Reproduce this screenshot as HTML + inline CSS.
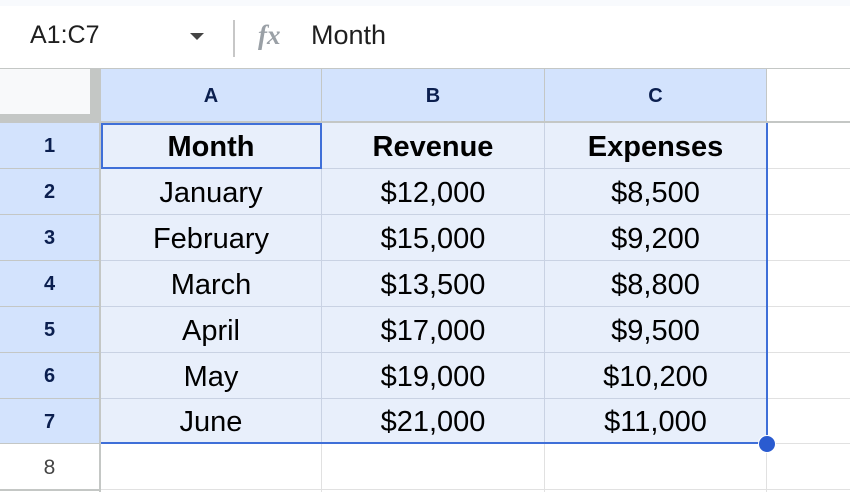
<!DOCTYPE html>
<html><head><style>
*{margin:0;padding:0;box-sizing:border-box}
body{width:850px;height:492px;overflow:hidden;background:#fff;font-family:"Liberation Sans",Arial,sans-serif;position:relative}
.a{position:absolute}
.c{position:absolute;display:flex;align-items:center;justify-content:center;font-size:29px;color:#000;padding-top:3px}
.h{position:absolute;display:flex;align-items:center;justify-content:center;font-size:20px;font-weight:bold;color:#0b1f4f;background:#d3e3fd;padding-top:2px}
</style></head><body>
<div class="a" style="left:0;top:0;width:850px;height:6px;background:#f8fafd"></div>
<div class="a" style="left:30px;top:21px;font-size:25px;color:#1f1f1f">A1:C7</div>
<div class="a" style="left:190px;top:33px;width:0;height:0;border-left:7px solid transparent;border-right:7px solid transparent;border-top:7px solid #444"></div>
<div class="a" style="left:233px;top:20px;width:2px;height:37px;background:#c7c7c7"></div>
<div class="a" style="left:258px;top:20px;font-size:27px;font-style:italic;font-family:'Liberation Serif',serif;color:#9aa0a6;font-weight:bold">fx</div>
<div class="a" style="left:311px;top:20px;font-size:27px;color:#1f1f1f">Month</div>
<div class="a" style="left:0;top:68px;width:850px;height:1px;background:#c4c7c5"></div>
<div class="a" style="left:0;top:69px;width:90px;height:45px;background:#f8f9fa"></div>
<div class="a" style="left:90px;top:69px;width:11px;height:54px;background:#c4c7c5"></div>
<div class="a" style="left:0;top:114px;width:101px;height:9px;background:#c4c7c5"></div>
<div class="h" style="left:101px;top:69px;width:220px;height:52px">A</div>
<div class="h" style="left:322px;top:69px;width:222px;height:52px">B</div>
<div class="h" style="left:545px;top:69px;width:221px;height:52px">C</div>
<div class="a" style="left:101px;top:121px;width:749px;height:2px;background:#c4c7c5"></div>
<div class="a" style="left:321px;top:69px;width:1px;height:53px;background:#c4c7c5"></div>
<div class="a" style="left:544px;top:69px;width:1px;height:53px;background:#c4c7c5"></div>
<div class="a" style="left:766px;top:69px;width:1px;height:53px;background:#c4c7c5"></div>
<div class="a" style="left:101px;top:123px;width:665px;height:320px;background:#e8effb"></div>
<div id="g"></div>
<div class="a" style="left:99px;top:123px;width:2px;height:369px;background:#c4c7c5"></div>
<script>
var g=document.getElementById('g'),s='';
var tops=[123,169,215,261,307,353,399,444,490];
for(var i=1;i<tops.length;i++){var y=tops[i]-1;
s+='<div class="a" style="left:101px;top:'+y+'px;width:749px;height:1px;background:'+(i<8?'#c9d2e3':'#e1e1e1')+'"></div>';
s+='<div class="a" style="left:0;top:'+y+'px;width:100px;height:2px;background:#c4c7c5"></div>';
s+='<div class="a" style="left:766px;top:'+y+'px;width:84px;height:1px;background:#e1e1e1"></div>';}
[321,544].forEach(function(x){s+='<div class="a" style="left:'+x+'px;top:123px;width:1px;height:320px;background:#c9d2e3"></div><div class="a" style="left:'+x+'px;top:443px;width:1px;height:49px;background:#e1e1e1"></div>';});
s+='<div class="a" style="left:766px;top:443px;width:1px;height:49px;background:#e1e1e1"></div>';
var d=[["Month","Revenue","Expenses"],["January","$12,000","$8,500"],["February","$15,000","$9,200"],["March","$13,500","$8,800"],["April","$17,000","$9,500"],["May","$19,000","$10,200"],["June","$21,000","$11,000"]];
var xs=[[101,220],[322,222],[545,221]];
for(var r=0;r<8;r++){var t=tops[r],hh=tops[r+1]-t-1;
s+='<div class="'+(r<7?'h':'c')+'" style="left:0;top:'+t+'px;width:99px;height:'+hh+'px;'+(r<7?'':'font-size:21px;color:#444;background:#fff')+'">'+(r+1)+'</div>';
if(r<7)for(var c=0;c<3;c++)s+='<div class="c" style="left:'+xs[c][0]+'px;top:'+t+'px;width:'+xs[c][1]+'px;height:'+hh+'px;'+(r==0?'font-weight:bold':'')+'">'+d[r][c]+'</div>';}
g.innerHTML=s;
</script>
<div class="a" style="left:766px;top:123px;width:2px;height:321px;background:#3f6fd8"></div>
<div class="a" style="left:101px;top:442px;width:667px;height:2px;background:#3f6fd8"></div>
<div class="a" style="left:101px;top:123px;width:221px;height:46px;border:2px solid #3f6fd8"></div>
<div class="a" style="left:758px;top:435px;width:18px;height:18px;border-radius:50%;background:#2a5bd0;border:1px solid #fff"></div>
</body></html>
